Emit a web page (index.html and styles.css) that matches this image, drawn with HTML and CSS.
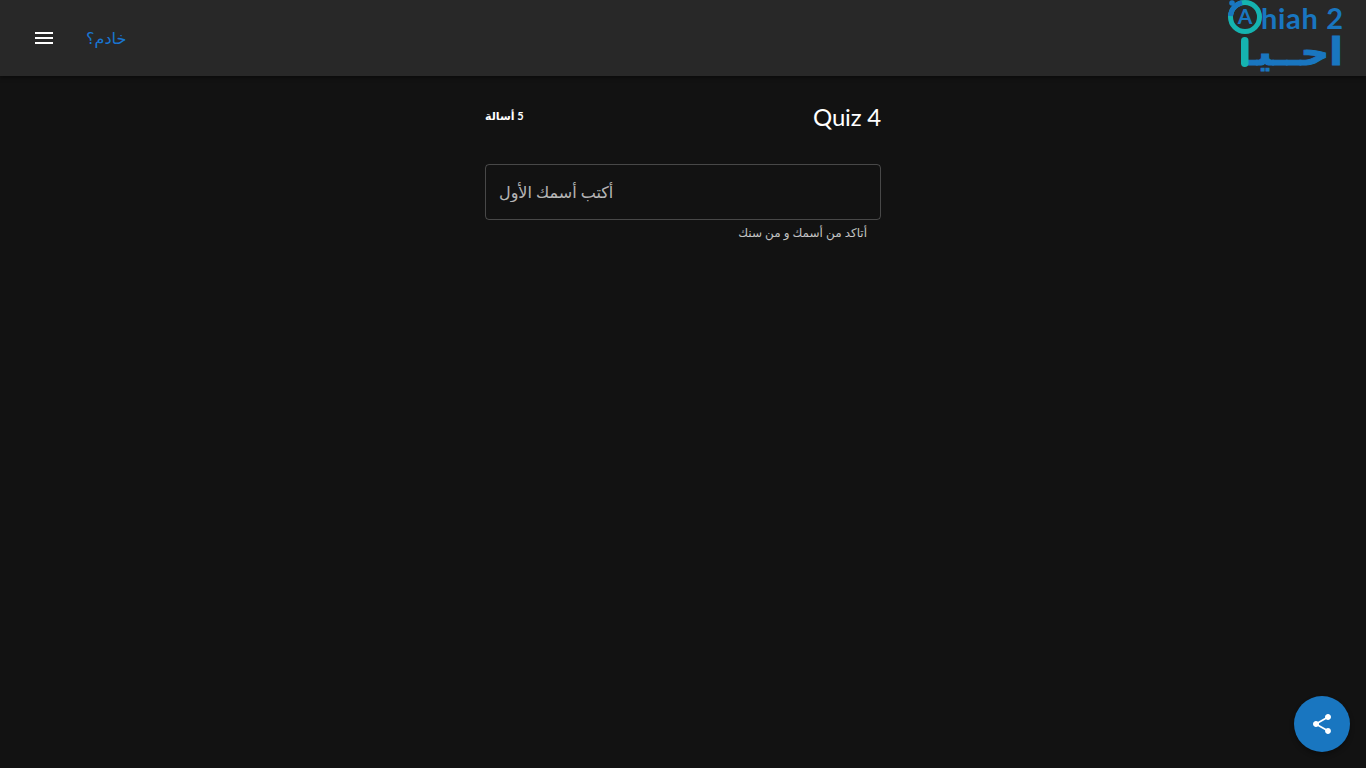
FILE: index.html
```html
<!DOCTYPE html>
<html lang="ar">
<head>
    <meta charset="utf-8">
    <title>Quiz 4</title>
    <link rel="stylesheet" href="styles.css">
</head>
<body>
    <header class="topbar">
        <button class="menu-btn" aria-label="menu">
            <svg viewBox="0 0 24 24" width="24" height="24"><path d="M3 18h18v-2H3v2zm0-5h18v-2H3v2zm0-7v2h18V6H3z"/></svg>
        </button>
        <a class="server-link" href="#">خادم؟</a>
        <svg class="logo" viewBox="0 0 116 76" width="116" height="76" aria-label="Ahiah 2">
            <circle cx="18" cy="17" r="14.5" fill="none" stroke="#15b3b0" stroke-width="5"/>
            <path d="M3.5 16A14.5 14.5 0 0 1 15 2.8" fill="none" stroke="#1976c0" stroke-width="5"/>
            <circle cx="5" cy="3" r="2.8" fill="#1976c0"/>
            <text x="18" y="24" class="logo-a" text-anchor="middle">A</text>
            <text x="34" y="29" class="logo-name">hiah 2</text>
            <text class="logo-ar" transform="translate(116 65) scale(1.05 1)" direction="rtl">احــيـ</text>
            <rect x="14" y="37" width="7.5" height="30" rx="3.7" fill="#15b3b0"/>
        </svg>
    </header>

    <main class="quiz">
        <div class="quiz-head">
            <span class="count">5 أسالة</span>
            <h1>Quiz 4</h1>
        </div>
        <input class="name-input" type="text" placeholder="أكتب أسمك الأول">
        <p class="helper">أتاكد من أسمك و من سنك</p>
    </main>

    <button class="fab" aria-label="share">
        <svg viewBox="0 0 24 24" width="24" height="24"><path d="M18 16.08c-.76 0-1.44.3-1.96.77L8.91 12.7c.05-.23.09-.46.09-.7s-.04-.47-.09-.7l7.05-4.11c.54.5 1.25.81 2.04.81 1.66 0 3-1.34 3-3s-1.34-3-3-3-3 1.34-3 3c0 .24.04.47.09.7L8.04 9.81C7.5 9.31 6.79 9 6 9c-1.66 0-3 1.34-3 3s1.34 3 3 3c.79 0 1.5-.31 2.04-.81l7.12 4.16c-.05.21-.08.43-.08.65 0 1.61 1.31 2.92 2.92 2.92 1.61 0 2.92-1.31 2.92-2.92s-1.31-2.92-2.92-2.92z"/></svg>
    </button>
</body>
</html>
```

FILE: styles.css
```css
html, body {
    height: 100%;
}
body {
    margin: 0;
    background-color: #121212;
    color: #fff;
    font-family: Lato, "DejaVu Sans", sans-serif;
    overflow: hidden;
}
.topbar {
    height: 76px;
    display: flex;
    align-items: center;
    padding: 0 23px 0 32px;
    background-color: #282828;
    box-shadow: 0 2px 4px rgba(0, 0, 0, 0.4);
}
.menu-btn {
    width: 24px;
    height: 24px;
    padding: 0;
    border: none;
    background: none;
    cursor: pointer;
}
.menu-btn svg {
    display: block;
    fill: #fff;
}
.server-link {
    margin-left: 30px;
    color: #1976d2;
    font-size: 16px;
    line-height: 20px;
    text-decoration: none;
}
.logo {
    margin-left: auto;
}
.logo-a {
    font: 700 21px Lato, sans-serif;
    fill: #1976c0;
}
.logo-name {
    font: 700 29px Lato, sans-serif;
    letter-spacing: 0.7px;
    fill: #1976c0;
}
.logo-ar {
    font: 700 38px "DejaVu Sans", sans-serif;
    fill: #1976c0;
    stroke: #1976c0;
    stroke-width: 1px;
}
.quiz {
    width: 396px;
    margin: 0 auto;
    padding-top: 23px;
}
.quiz-head {
    display: flex;
    justify-content: space-between;
    align-items: flex-start;
    height: 65px;
}
.count {
    font-size: 11px;
    font-weight: 700;
    line-height: 34px;
    direction: rtl;
}
h1 {
    margin: 0;
    font-size: 24px;
    font-weight: 400;
    line-height: 36px;
    letter-spacing: -0.2px;
}
.name-input {
    display: block;
    width: 100%;
    height: 56px;
    box-sizing: border-box;
    padding: 0 13px 2px;
    background: none;
    border: 1px solid rgba(255, 255, 255, 0.23);
    border-radius: 4px;
    color: #fff;
    font-family: inherit;
    font-size: 16px;
    outline: none;
}
.name-input::placeholder {
    color: rgba(255, 255, 255, 0.7);
    opacity: 1;
}
.helper {
    margin: 3px 14px 0;
    color: rgba(255, 255, 255, 0.75);
    font-size: 12px;
    line-height: 20px;
    direction: rtl;
}
.fab {
    position: fixed;
    right: 16px;
    bottom: 16px;
    width: 56px;
    height: 56px;
    display: flex;
    align-items: center;
    justify-content: center;
    padding: 0;
    border: none;
    border-radius: 50%;
    background-color: #1976c0;
    box-shadow: 0 3px 5px rgba(0, 0, 0, 0.3);
    cursor: pointer;
}
.fab svg {
    fill: #fff;
}
```
